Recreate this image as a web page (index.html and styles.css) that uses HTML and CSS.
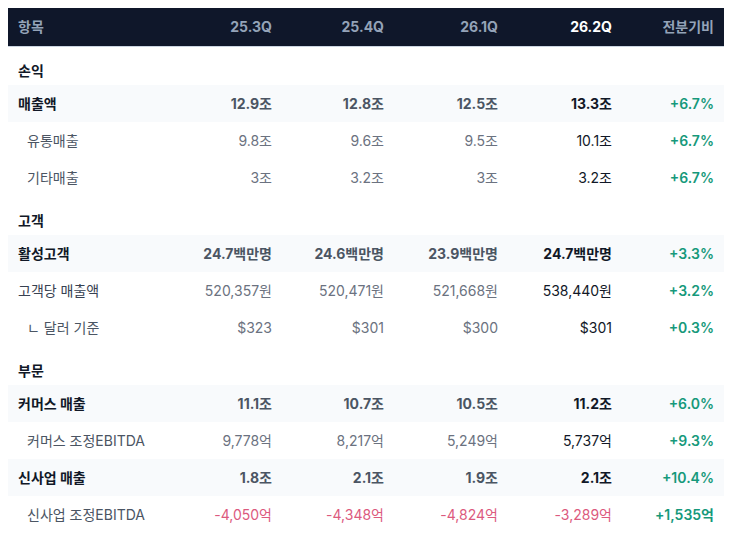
FILE: index.html
```html
<!DOCTYPE html>
<html lang="ko">
<head>
<meta charset="utf-8">
<link rel="stylesheet" href="styles.css">
</head>
<body>
<table class="fin">
  <colgroup>
    <col class="c-label"><col class="c-q"><col class="c-q2"><col class="c-q3"><col class="c-q3"><col class="c-chg">
  </colgroup>
  <thead>
    <tr><th class="lbl">항목</th><th>25.3Q</th><th>25.4Q</th><th>26.1Q</th><th class="cur">26.2Q</th><th>전분기비</th></tr>
  </thead>
  <tbody>
    <tr class="sec"><td colspan="6">손익</td></tr>
    <tr class="main"><td class="lbl">매출액</td><td>12.9조</td><td>12.8조</td><td>12.5조</td><td class="cur">13.3조</td><td class="up">+6.7%</td></tr>
    <tr class="sub"><td class="lbl ind">유통매출</td><td>9.8조</td><td>9.6조</td><td>9.5조</td><td class="cur">10.1조</td><td class="up">+6.7%</td></tr>
    <tr class="sub"><td class="lbl ind">기타매출</td><td>3조</td><td>3.2조</td><td>3조</td><td class="cur">3.2조</td><td class="up">+6.7%</td></tr>
    <tr class="sec"><td colspan="6">고객</td></tr>
    <tr class="main"><td class="lbl">활성고객</td><td>24.7백만명</td><td>24.6백만명</td><td>23.9백만명</td><td class="cur">24.7백만명</td><td class="up">+3.3%</td></tr>
    <tr class="sub"><td class="lbl dark">고객당 매출액</td><td>520,357원</td><td>520,471원</td><td>521,668원</td><td class="cur">538,440원</td><td class="up">+3.2%</td></tr>
    <tr class="sub"><td class="lbl ind">ㄴ 달러 기준</td><td>$323</td><td>$301</td><td>$300</td><td class="cur">$301</td><td class="up">+0.3%</td></tr>
    <tr class="sec"><td colspan="6">부문</td></tr>
    <tr class="main"><td class="lbl">커머스 매출</td><td>11.1조</td><td>10.7조</td><td>10.5조</td><td class="cur">11.2조</td><td class="up">+6.0%</td></tr>
    <tr class="sub"><td class="lbl ind">커머스 조정EBITDA</td><td>9,778억</td><td>8,217억</td><td>5,249억</td><td class="cur">5,737억</td><td class="up">+9.3%</td></tr>
    <tr class="main"><td class="lbl">신사업 매출</td><td>1.8조</td><td>2.1조</td><td>1.9조</td><td class="cur">2.1조</td><td class="up">+10.4%</td></tr>
    <tr class="sub"><td class="lbl ind">신사업 조정EBITDA</td><td class="down">-4,050억</td><td class="down">-4,348억</td><td class="down">-4,824억</td><td class="down">-3,289억</td><td class="up">+1,535억</td></tr>
  </tbody>
</table>
</body>
</html>
```
FILE: styles.css
```css
html, body {
  margin: 0;
  background: #ffffff;
}
body {
  padding: 8px;
  font-family: Inter, "Noto Sans CJK KR", sans-serif;
  font-size: 14px;
  color: #111827;
}
.fin {
  width: 716px;
  border-collapse: collapse;
  table-layout: fixed;
}
.c-label { width: 161px; }
.c-q { width: 113px; }
.c-q2 { width: 112px; }
.c-q3 { width: 114px; }
.c-chg { width: 102px; }

.fin th, .fin td {
  padding: 0 10px;
  text-align: right;
  white-space: nowrap;
  line-height: 20px;
}
.fin .lbl { text-align: left; }

.fin thead tr {
  background: #0f172a;
  height: 38px;
}
.fin th {
  color: #94a3b8;
  font-weight: 700;
  font-size: 14px;
  border-bottom: 1px solid #cbd5e1;
}
.fin th.cur { color: #ffffff; }

.sec td {
  height: 39px;
  vertical-align: bottom;
  padding-bottom: 4px;
  text-align: left;
  font-weight: 700;
  color: #111827;
  box-sizing: border-box;
}

.main td, .sub td {
  height: 37px;
  box-sizing: border-box;
}
.main { background: #f8fafc; }
.main td {
  font-weight: 700;
  color: #4b5563;
}
.main td.lbl { color: #111827; }
.main td.cur { color: #111827; }

.sub td { color: #6b7280; }
.sub td.lbl { color: #4b5563; }
.sub td.lbl.dark { color: #374151; }
.sub td.cur { color: #111827; }
.ind { padding-left: 19px !important; }

.fin td.up { color: #16997b; font-weight: 600; }
.fin td.down { color: #dc5a7e; }
```
